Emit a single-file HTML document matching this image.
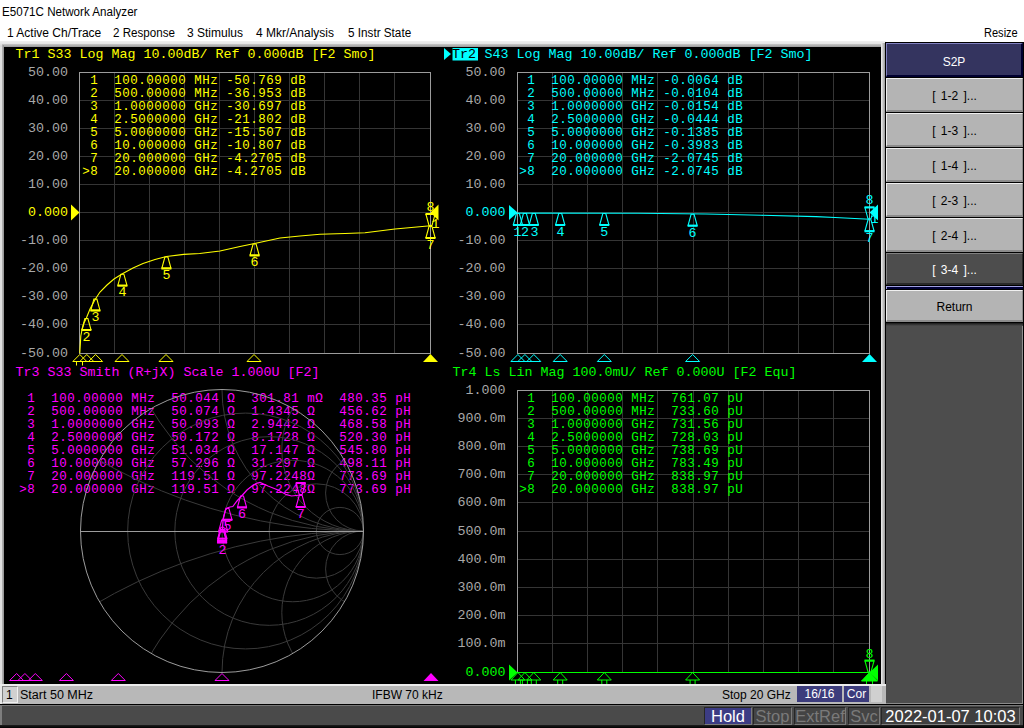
<!DOCTYPE html>
<html><head><meta charset="utf-8">
<style>
*{margin:0;padding:0;box-sizing:border-box}
html,body{width:1024px;height:728px;overflow:hidden;background:#fff;font-family:"Liberation Sans", sans-serif}
.a{position:absolute;white-space:pre}
.menu{font-size:12px;color:#000}
.sk{position:absolute;left:886px;width:137px;height:34px;background:#b4b4b4;border-top:1px solid #f0f0f0;border-left:1px solid #f0f0f0;border-right:1px solid #8c8c8c;border-bottom:2px solid #8c8c8c;font-size:12px;color:#000;text-align:center;line-height:35px;word-spacing:2px}
.nv{background:#34345f;color:#fff;border-top-color:#8080c0;border-left-color:#8080c0;border-right:2px solid #000030;border-bottom:2px solid #000030}
.dk{background:#4d4d4d;color:#fff;border-top-color:#808080;border-left-color:#808080;border-right-color:#2a2a2a;border-bottom-color:#2a2a2a}
.sb{position:absolute;font-size:12px;color:#000}
.bx{position:absolute;top:707px;height:18px;border:1px solid #7a7a7a;border-top-color:#262626;border-left-color:#262626;background:#444;color:#7a7a7a;font-size:16.5px;line-height:16px;text-align:center}
</style></head><body>
<div class="a" style="left:2px;top:5px;font-size:12px;transform:scaleX(0.967);transform-origin:0 0">E5071C Network Analyzer</div>
<div class="a menu" style="left:7px;top:26px">1 Active Ch/Trace</div>
<div class="a menu" style="left:113px;top:26px;transform:scaleX(0.967);transform-origin:0 0">2 Response</div>
<div class="a menu" style="left:187px;top:26px">3 Stimulus</div>
<div class="a menu" style="left:256px;top:26px">4 Mkr/Analysis</div>
<div class="a menu" style="left:348px;top:26px;transform:scaleX(0.976);transform-origin:0 0">5 Instr State</div>
<div class="a menu" style="left:984px;top:26px;transform:scaleX(0.92);transform-origin:0 0">Resize</div>
<!-- frame -->
<div class="a" style="left:0;top:41px;width:886px;height:663px;background:linear-gradient(#f0f0f0,#e4e4e4 3px,#d8d8d8 5px,#d8d8d8)"></div>
<div class="a" style="left:0;top:47px;width:2px;height:640px;background:#e0e0e0"></div>
<div class="a" style="left:2px;top:44px;width:879px;height:3px;background:linear-gradient(#c8c8c8,#9a9a9a)"></div>
<div class="a" style="left:2px;top:45px;width:2px;height:639px;background:linear-gradient(90deg,#b8b8b8,#909090)"></div>
<div class="a" style="left:4px;top:47px;width:877px;height:637px;background:#000"></div>
<div class="a" style="left:881px;top:43px;width:4px;height:661px;background:linear-gradient(90deg,#f0f0f0,#9a9a9a)"></div>
<div class="a" style="left:885px;top:43px;width:1px;height:661px;background:#000"></div>
<svg class="a" style="left:0;top:0" width="1024" height="728" font-family='"Liberation Mono", monospace'>
<path d="M114.5 72.5V353.5 M149.5 72.5V353.5 M184.5 72.5V353.5 M219.5 72.5V353.5 M254.5 72.5V353.5 M289.5 72.5V353.5 M324.5 72.5V353.5 M359.5 72.5V353.5 M394.5 72.5V353.5 M79.5 100.5H430.5 M79.5 128.5H430.5 M79.5 156.5H430.5 M79.5 184.5H430.5 M79.5 212.5H430.5 M79.5 240.5H430.5 M79.5 268.5H430.5 M79.5 296.5H430.5 M79.5 324.5H430.5" stroke="#353535" stroke-width="1" fill="none" shape-rendering="crispEdges"/>
<rect x="79.5" y="72.5" width="351" height="281" stroke="#9c9c9c" stroke-width="1" fill="none" shape-rendering="crispEdges"/>
<text x="68" y="76.1" fill="#a8a8a8" text-anchor="end" font-size="13.33" >50.00</text>
<text x="68" y="104.1" fill="#a8a8a8" text-anchor="end" font-size="13.33" >40.00</text>
<text x="68" y="132.1" fill="#a8a8a8" text-anchor="end" font-size="13.33" >30.00</text>
<text x="68" y="160.1" fill="#a8a8a8" text-anchor="end" font-size="13.33" >20.00</text>
<text x="68" y="188.1" fill="#a8a8a8" text-anchor="end" font-size="13.33" >10.00</text>
<text x="68" y="216.1" fill="#ffff00" text-anchor="end" font-size="13.33" >0.000</text>
<text x="68" y="244.1" fill="#a8a8a8" text-anchor="end" font-size="13.33" >-10.00</text>
<text x="68" y="272.1" fill="#a8a8a8" text-anchor="end" font-size="13.33" >-20.00</text>
<text x="68" y="300.1" fill="#a8a8a8" text-anchor="end" font-size="13.33" >-30.00</text>
<text x="68" y="328.1" fill="#a8a8a8" text-anchor="end" font-size="13.33" >-40.00</text>
<text x="68" y="357.1" fill="#a8a8a8" text-anchor="end" font-size="13.33" >-50.00</text>
<path d="M552.5 72.5V353.5 M587.5 72.5V353.5 M622.5 72.5V353.5 M657.5 72.5V353.5 M693.5 72.5V353.5 M728.5 72.5V353.5 M763.5 72.5V353.5 M798.5 72.5V353.5 M833.5 72.5V353.5 M517.5 100.5H869.5 M517.5 128.5H869.5 M517.5 156.5H869.5 M517.5 184.5H869.5 M517.5 212.5H869.5 M517.5 240.5H869.5 M517.5 268.5H869.5 M517.5 296.5H869.5 M517.5 324.5H869.5" stroke="#353535" stroke-width="1" fill="none" shape-rendering="crispEdges"/>
<rect x="517.5" y="72.5" width="352" height="281" stroke="#9c9c9c" stroke-width="1" fill="none" shape-rendering="crispEdges"/>
<text x="505.5" y="76.1" fill="#a8a8a8" text-anchor="end" font-size="13.33" >50.00</text>
<text x="505.5" y="104.1" fill="#a8a8a8" text-anchor="end" font-size="13.33" >40.00</text>
<text x="505.5" y="132.1" fill="#a8a8a8" text-anchor="end" font-size="13.33" >30.00</text>
<text x="505.5" y="160.1" fill="#a8a8a8" text-anchor="end" font-size="13.33" >20.00</text>
<text x="505.5" y="188.1" fill="#a8a8a8" text-anchor="end" font-size="13.33" >10.00</text>
<text x="505.5" y="216.1" fill="#00ffff" text-anchor="end" font-size="13.33" >0.000</text>
<text x="505.5" y="244.1" fill="#a8a8a8" text-anchor="end" font-size="13.33" >-10.00</text>
<text x="505.5" y="272.1" fill="#a8a8a8" text-anchor="end" font-size="13.33" >-20.00</text>
<text x="505.5" y="300.1" fill="#a8a8a8" text-anchor="end" font-size="13.33" >-30.00</text>
<text x="505.5" y="328.1" fill="#a8a8a8" text-anchor="end" font-size="13.33" >-40.00</text>
<text x="505.5" y="357.1" fill="#a8a8a8" text-anchor="end" font-size="13.33" >-50.00</text>
<path d="M552.5 390.5V672.5 M587.5 390.5V672.5 M622.5 390.5V672.5 M657.5 390.5V672.5 M693.5 390.5V672.5 M728.5 390.5V672.5 M763.5 390.5V672.5 M798.5 390.5V672.5 M833.5 390.5V672.5 M517.5 418.5H869.5 M517.5 446.5H869.5 M517.5 474.5H869.5 M517.5 502.5H869.5 M517.5 531.5H869.5 M517.5 559.5H869.5 M517.5 587.5H869.5 M517.5 615.5H869.5 M517.5 643.5H869.5" stroke="#353535" stroke-width="1" fill="none" shape-rendering="crispEdges"/>
<rect x="517.5" y="390.5" width="352" height="282" stroke="#9c9c9c" stroke-width="1" fill="none" shape-rendering="crispEdges"/>
<text x="505.5" y="394.1" fill="#a8a8a8" text-anchor="end" font-size="13.33" >1.000</text>
<text x="505.5" y="422.1" fill="#a8a8a8" text-anchor="end" font-size="13.33" >900.0m</text>
<text x="505.5" y="450.1" fill="#a8a8a8" text-anchor="end" font-size="13.33" >800.0m</text>
<text x="505.5" y="478.1" fill="#a8a8a8" text-anchor="end" font-size="13.33" >700.0m</text>
<text x="505.5" y="506.1" fill="#a8a8a8" text-anchor="end" font-size="13.33" >600.0m</text>
<text x="505.5" y="535.1" fill="#a8a8a8" text-anchor="end" font-size="13.33" >500.0m</text>
<text x="505.5" y="563.1" fill="#a8a8a8" text-anchor="end" font-size="13.33" >400.0m</text>
<text x="505.5" y="591.1" fill="#a8a8a8" text-anchor="end" font-size="13.33" >300.0m</text>
<text x="505.5" y="619.1" fill="#a8a8a8" text-anchor="end" font-size="13.33" >200.0m</text>
<text x="505.5" y="647.1" fill="#a8a8a8" text-anchor="end" font-size="13.33" >100.0m</text>
<text x="505.5" y="676.1" fill="#00ff00" text-anchor="end" font-size="13.33" >0.000</text>
<text x="15.5" y="58" fill="#ffff00" text-anchor="start" font-size="13.33" >Tr1 S33 Log Mag 10.00dB/ Ref 0.000dB [F2 Smo]</text>
<path d="M444 48L451 54L444 60Z" fill="#00ffff"/>
<rect x="452.5" y="48" width="25.5" height="12.5" fill="#00ffff"/>
<text x="452" y="58" fill="#000000" text-anchor="start" font-size="13.33" >Tr2</text>
<text x="484.5" y="58" fill="#00ffff" text-anchor="start" font-size="13.33" >S43 Log Mag 10.00dB/ Ref 0.000dB [F2 Smo]</text>
<text x="15.5" y="376" fill="#ff00ff" text-anchor="start" font-size="13.33" >Tr3 S33 Smith (R+jX) Scale 1.000U [F2]</text>
<text x="452.5" y="376" fill="#00ff00" text-anchor="start" font-size="13.33" >Tr4 Ls Lin Mag 100.0mU/ Ref 0.000U [F2 Equ]</text>
<text x="82.25" y="84" fill="#ffff00" text-anchor="start" font-size="12.5" xml:space="preserve" letter-spacing="0.5"> 1  100.00000 MHz -50.769 dB</text>
<text x="82.25" y="97" fill="#ffff00" text-anchor="start" font-size="12.5" xml:space="preserve" letter-spacing="0.5"> 2  500.00000 MHz -36.953 dB</text>
<text x="82.25" y="110" fill="#ffff00" text-anchor="start" font-size="12.5" xml:space="preserve" letter-spacing="0.5"> 3  1.0000000 GHz -30.697 dB</text>
<text x="82.25" y="123" fill="#ffff00" text-anchor="start" font-size="12.5" xml:space="preserve" letter-spacing="0.5"> 4  2.5000000 GHz -21.802 dB</text>
<text x="82.25" y="136" fill="#ffff00" text-anchor="start" font-size="12.5" xml:space="preserve" letter-spacing="0.5"> 5  5.0000000 GHz -15.507 dB</text>
<text x="82.25" y="149" fill="#ffff00" text-anchor="start" font-size="12.5" xml:space="preserve" letter-spacing="0.5"> 6  10.000000 GHz -10.807 dB</text>
<text x="82.25" y="162" fill="#ffff00" text-anchor="start" font-size="12.5" xml:space="preserve" letter-spacing="0.5"> 7  20.000000 GHz -4.2705 dB</text>
<text x="82.25" y="175" fill="#ffff00" text-anchor="start" font-size="12.5" xml:space="preserve" letter-spacing="0.5">&gt;8  20.000000 GHz -4.2705 dB</text>
<text x="519.25" y="84" fill="#00ffff" text-anchor="start" font-size="12.5" xml:space="preserve" letter-spacing="0.5"> 1  100.00000 MHz -0.0064 dB</text>
<text x="519.25" y="97" fill="#00ffff" text-anchor="start" font-size="12.5" xml:space="preserve" letter-spacing="0.5"> 2  500.00000 MHz -0.0104 dB</text>
<text x="519.25" y="110" fill="#00ffff" text-anchor="start" font-size="12.5" xml:space="preserve" letter-spacing="0.5"> 3  1.0000000 GHz -0.0154 dB</text>
<text x="519.25" y="123" fill="#00ffff" text-anchor="start" font-size="12.5" xml:space="preserve" letter-spacing="0.5"> 4  2.5000000 GHz -0.0444 dB</text>
<text x="519.25" y="136" fill="#00ffff" text-anchor="start" font-size="12.5" xml:space="preserve" letter-spacing="0.5"> 5  5.0000000 GHz -0.1385 dB</text>
<text x="519.25" y="149" fill="#00ffff" text-anchor="start" font-size="12.5" xml:space="preserve" letter-spacing="0.5"> 6  10.000000 GHz -0.3983 dB</text>
<text x="519.25" y="162" fill="#00ffff" text-anchor="start" font-size="12.5" xml:space="preserve" letter-spacing="0.5"> 7  20.000000 GHz -2.0745 dB</text>
<text x="519.25" y="175" fill="#00ffff" text-anchor="start" font-size="12.5" xml:space="preserve" letter-spacing="0.5">&gt;8  20.000000 GHz -2.0745 dB</text>
<text x="19.25" y="402" fill="#ff00ff" text-anchor="start" font-size="12.5" xml:space="preserve" letter-spacing="0.5"> 1  100.00000 MHz  50.044 Ω  301.81 mΩ  480.35 pH</text>
<text x="19.25" y="415" fill="#ff00ff" text-anchor="start" font-size="12.5" xml:space="preserve" letter-spacing="0.5"> 2  500.00000 MHz  50.074 Ω  1.4345 Ω   456.62 pH</text>
<text x="19.25" y="428" fill="#ff00ff" text-anchor="start" font-size="12.5" xml:space="preserve" letter-spacing="0.5"> 3  1.0000000 GHz  50.093 Ω  2.9442 Ω   468.58 pH</text>
<text x="19.25" y="441" fill="#ff00ff" text-anchor="start" font-size="12.5" xml:space="preserve" letter-spacing="0.5"> 4  2.5000000 GHz  50.172 Ω  8.1728 Ω   520.30 pH</text>
<text x="19.25" y="454" fill="#ff00ff" text-anchor="start" font-size="12.5" xml:space="preserve" letter-spacing="0.5"> 5  5.0000000 GHz  51.034 Ω  17.147 Ω   545.80 pH</text>
<text x="19.25" y="467" fill="#ff00ff" text-anchor="start" font-size="12.5" xml:space="preserve" letter-spacing="0.5"> 6  10.000000 GHz  57.296 Ω  31.297 Ω   498.11 pH</text>
<text x="19.25" y="480" fill="#ff00ff" text-anchor="start" font-size="12.5" xml:space="preserve" letter-spacing="0.5"> 7  20.000000 GHz  119.51 Ω  97.2248Ω   773.69 pH</text>
<text x="19.25" y="493" fill="#ff00ff" text-anchor="start" font-size="12.5" xml:space="preserve" letter-spacing="0.5">&gt;8  20.000000 GHz  119.51 Ω  97.2248Ω   773.69 pH</text>
<text x="519.25" y="402" fill="#00ff00" text-anchor="start" font-size="12.5" xml:space="preserve" letter-spacing="0.5"> 1  100.00000 MHz  761.07 pU</text>
<text x="519.25" y="415" fill="#00ff00" text-anchor="start" font-size="12.5" xml:space="preserve" letter-spacing="0.5"> 2  500.00000 MHz  733.60 pU</text>
<text x="519.25" y="428" fill="#00ff00" text-anchor="start" font-size="12.5" xml:space="preserve" letter-spacing="0.5"> 3  1.0000000 GHz  731.56 pU</text>
<text x="519.25" y="441" fill="#00ff00" text-anchor="start" font-size="12.5" xml:space="preserve" letter-spacing="0.5"> 4  2.5000000 GHz  728.03 pU</text>
<text x="519.25" y="454" fill="#00ff00" text-anchor="start" font-size="12.5" xml:space="preserve" letter-spacing="0.5"> 5  5.0000000 GHz  738.69 pU</text>
<text x="519.25" y="467" fill="#00ff00" text-anchor="start" font-size="12.5" xml:space="preserve" letter-spacing="0.5"> 6  10.000000 GHz  783.49 pU</text>
<text x="519.25" y="480" fill="#00ff00" text-anchor="start" font-size="12.5" xml:space="preserve" letter-spacing="0.5"> 7  20.000000 GHz  838.97 pU</text>
<text x="519.25" y="493" fill="#00ff00" text-anchor="start" font-size="12.5" xml:space="preserve" letter-spacing="0.5">&gt;8  20.000000 GHz  838.97 pU</text>
<polyline points="79.8,353 80.3,345 80.8,336 82,330 84,323 86.4,318 90,309 95.4,299 100,292 107,285 114,279 122.4,273.8 133,268 143,263.5 155,259.5 166.4,256.5 183.8,254.4 199.7,253.5 220,251 240,246.5 254.6,243.5 280,238 300,236 320,234.3 345,233.5 365,232.8 395,229 430.5,225.8" stroke="#ffff00" stroke-width="1.1" fill="none"/>
<polyline points="517.5,213.1 638,213.3 706,214 761,215.3 816,216.6 835,217.5 869.5,219.2" stroke="#00ffff" stroke-width="1.1" fill="none"/>
<path d="M517 672.5H870" stroke="#00ff00" stroke-width="1.2"/>
<path d="M84.9 318.5L87.9 318.5L90.9 329.5L81.9 329.5Z" stroke="#ffff00" stroke-width="1.1" fill="none"/>
<rect x="81.4" y="329.0" width="10" height="2" fill="#ffff00"/>
<text x="86.4" y="340.5" fill="#ffff00" text-anchor="middle" font-size="13.33" >2</text>
<path d="M93.9 299.1L96.9 299.1L99.9 310.1L90.9 310.1Z" stroke="#ffff00" stroke-width="1.1" fill="none"/>
<rect x="90.4" y="309.6" width="10" height="2" fill="#ffff00"/>
<text x="95.4" y="321.1" fill="#ffff00" text-anchor="middle" font-size="13.33" >3</text>
<path d="M120.9 274.2L123.9 274.2L126.9 285.2L117.9 285.2Z" stroke="#ffff00" stroke-width="1.1" fill="none"/>
<rect x="117.4" y="284.7" width="10" height="2" fill="#ffff00"/>
<text x="122.4" y="296.2" fill="#ffff00" text-anchor="middle" font-size="13.33" >4</text>
<path d="M164.9 257.0L167.9 257.0L170.9 268.0L161.9 268.0Z" stroke="#ffff00" stroke-width="1.1" fill="none"/>
<rect x="161.4" y="267.5" width="10" height="2" fill="#ffff00"/>
<text x="166.4" y="279.0" fill="#ffff00" text-anchor="middle" font-size="13.33" >5</text>
<path d="M253.1 244.0L256.1 244.0L259.1 255.0L250.1 255.0Z" stroke="#ffff00" stroke-width="1.1" fill="none"/>
<rect x="249.6" y="254.5" width="10" height="2" fill="#ffff00"/>
<text x="254.6" y="266.0" fill="#ffff00" text-anchor="middle" font-size="13.33" >6</text>
<path d="M429.0 226.5L432.0 226.5L435.0 237.5L426.0 237.5Z" stroke="#ffff00" stroke-width="1.1" fill="none"/>
<rect x="425.5" y="237.0" width="10" height="2" fill="#ffff00"/>
<text x="430.5" y="248.5" fill="#ffff00" text-anchor="middle" font-size="13.33" >7</text>
<path d="M429.0 225.5L432.0 225.5L435.0 214.5L426.0 214.5Z" stroke="#ffff00" stroke-width="1.1" fill="none"/>
<rect x="425.5" y="213.0" width="10" height="2" fill="#ffff00"/>
<text x="430.5" y="211" fill="#ffff00" text-anchor="middle" font-size="13.33" >8</text>
<text x="435.5" y="227.5" fill="#ffff00" text-anchor="middle" font-size="13.33" >1</text>
<path d="M79.8 354.5L86.8 361.5L72.8 361.5Z" stroke="#ffff00" stroke-width="1" fill="none"/>
<path d="M86.8 354.5L93.8 361.5L79.8 361.5Z" stroke="#ffff00" stroke-width="1" fill="none"/>
<path d="M95.6 354.5L102.6 361.5L88.6 361.5Z" stroke="#ffff00" stroke-width="1" fill="none"/>
<path d="M122.0 354.5L129.0 361.5L115.0 361.5Z" stroke="#ffff00" stroke-width="1" fill="none"/>
<path d="M166.0 354.5L173.0 361.5L159.0 361.5Z" stroke="#ffff00" stroke-width="1" fill="none"/>
<path d="M254.0 354.5L261.0 361.5L247.0 361.5Z" stroke="#ffff00" stroke-width="1" fill="none"/>
<path d="M430.5 354L438.0 362L423.0 362Z" fill="#ffff00"/>
<path d="M76.5 361V365.5M82.5 361V365.5" stroke="#ffff00" stroke-width="1"/>
<path d="M71 204.5L79.5 212.5L71 220.5Z" fill="#ffff00"/>
<path d="M438.5 204.5L430.5 212.5L438.5 220.5Z" fill="#ffff00"/>
<path d="M516.4 213.5L519.4 213.5L522.4 224.5L513.4 224.5Z" stroke="#00ffff" stroke-width="1.1" fill="none"/>
<rect x="512.9" y="224.0" width="10" height="2" fill="#00ffff"/>
<path d="M523.4 213.5L526.4 213.5L529.4 224.5L520.4 224.5Z" stroke="#00ffff" stroke-width="1.1" fill="none"/>
<rect x="519.9" y="224.0" width="10" height="2" fill="#00ffff"/>
<path d="M532.3 213.5L535.3 213.5L538.3 224.5L529.3 224.5Z" stroke="#00ffff" stroke-width="1.1" fill="none"/>
<rect x="528.8" y="224.0" width="10" height="2" fill="#00ffff"/>
<path d="M558.7 213.5L561.7 213.5L564.7 224.5L555.7 224.5Z" stroke="#00ffff" stroke-width="1.1" fill="none"/>
<rect x="555.2" y="224.0" width="10" height="2" fill="#00ffff"/>
<path d="M602.8 213.5L605.8 213.5L608.8 224.5L599.8 224.5Z" stroke="#00ffff" stroke-width="1.1" fill="none"/>
<rect x="599.3" y="224.0" width="10" height="2" fill="#00ffff"/>
<path d="M691.1 214.3L694.1 214.3L697.1 225.3L688.1 225.3Z" stroke="#00ffff" stroke-width="1.1" fill="none"/>
<rect x="687.6" y="224.8" width="10" height="2" fill="#00ffff"/>
<text x="517.5" y="236" fill="#00ffff" text-anchor="middle" font-size="13.33" >1</text>
<text x="525" y="236" fill="#00ffff" text-anchor="middle" font-size="13.33" >2</text>
<text x="534.5" y="236" fill="#00ffff" text-anchor="middle" font-size="13.33" >3</text>
<text x="560.4" y="236" fill="#00ffff" text-anchor="middle" font-size="13.33" >4</text>
<text x="604.3" y="236" fill="#00ffff" text-anchor="middle" font-size="13.33" >5</text>
<text x="692.6" y="237" fill="#00ffff" text-anchor="middle" font-size="13.33" >6</text>
<text x="874.5" y="222.5" fill="#00ffff" text-anchor="middle" font-size="13.33" >1</text>
<path d="M868.0 219.8L871.0 219.8L874.0 230.8L865.0 230.8Z" stroke="#00ffff" stroke-width="1.1" fill="none"/>
<rect x="864.5" y="230.3" width="10" height="2" fill="#00ffff"/>
<text x="869.5" y="241.8" fill="#00ffff" text-anchor="middle" font-size="13.33" >7</text>
<path d="M868.0 218.8L871.0 218.8L874.0 207.8L865.0 207.8Z" stroke="#00ffff" stroke-width="1.1" fill="none"/>
<rect x="864.5" y="206.3" width="10" height="2" fill="#00ffff"/>
<text x="869.5" y="204.3" fill="#00ffff" text-anchor="middle" font-size="13.33" >8</text>
<path d="M517.9 354.5L524.9 361.5L510.9 361.5Z" stroke="#00ffff" stroke-width="1" fill="none"/>
<path d="M524.9 354.5L531.9 361.5L517.9 361.5Z" stroke="#00ffff" stroke-width="1" fill="none"/>
<path d="M533.8 354.5L540.8 361.5L526.8 361.5Z" stroke="#00ffff" stroke-width="1" fill="none"/>
<path d="M560.2 354.5L567.2 361.5L553.2 361.5Z" stroke="#00ffff" stroke-width="1" fill="none"/>
<path d="M604.3 354.5L611.3 361.5L597.3 361.5Z" stroke="#00ffff" stroke-width="1" fill="none"/>
<path d="M692.6 354.5L699.6 361.5L685.6 361.5Z" stroke="#00ffff" stroke-width="1" fill="none"/>
<path d="M869.5 354L877.0 362L862.0 362Z" fill="#00ffff"/>
<path d="M509 205L517.5 212.5L509 220Z" fill="#00ffff"/>
<path d="M878 204.5L869.5 212.5L878 220.5Z" fill="#00ffff"/>
<path d="M517.9 672.5L524.9 680L510.9 680Z M515.4 680V684 M520.4 680V684" stroke="#00ff00" stroke-width="1" fill="none"/>
<path d="M524.9 672.5L531.9 680L517.9 680Z M522.4 680V684 M527.4 680V684" stroke="#00ff00" stroke-width="1" fill="none"/>
<path d="M533.8 672.5L540.8 680L526.8 680Z M531.3 680V684 M536.3 680V684" stroke="#00ff00" stroke-width="1" fill="none"/>
<path d="M560.2 672.5L567.2 680L553.2 680Z M557.7 680V684 M562.7 680V684" stroke="#00ff00" stroke-width="1" fill="none"/>
<path d="M604.3 672.5L611.3 680L597.3 680Z M601.8 680V684 M606.8 680V684" stroke="#00ff00" stroke-width="1" fill="none"/>
<path d="M692.6 672.5L699.6 680L685.6 680Z M690.1 680V684 M695.1 680V684" stroke="#00ff00" stroke-width="1" fill="none"/>
<path d="M868.0 672.0L871.0 672.0L874.0 661.0L865.0 661.0Z" stroke="#00ff00" stroke-width="1.1" fill="none"/>
<rect x="864.5" y="659.5" width="10" height="2" fill="#00ff00"/>
<text x="869.5" y="657.5" fill="#00ff00" text-anchor="middle" font-size="13.33" >8</text>
<path d="M509 664.5L517.5 672.5L509 680.5Z" fill="#00ff00"/>
<path d="M878 664.5L869.5 672.5L878 680.5Z" fill="#00ff00"/>
<path d="M869.5 672.5L877.5 681L861.5 681Z M866.5 681V684 M872.5 681V684" fill="#00ff00" stroke="#00ff00" stroke-width="1"/>
<defs><clipPath id="sc"><circle cx="222" cy="531" r="141.5"/></clipPath></defs>
<g stroke="#3a3a3a" stroke-width="1" fill="none" clip-path="url(#sc)"><circle cx="245.58" cy="531" r="117.92"/><circle cx="269.17" cy="531" r="94.33"/><circle cx="292.75" cy="531" r="70.75"/><circle cx="316.33" cy="531" r="47.17"/><circle cx="339.92" cy="531" r="23.58"/><circle cx="363.50" cy="2.91" r="528.09"/><circle cx="363.50" cy="1059.09" r="528.09"/><circle cx="363.50" cy="285.91" r="245.09"/><circle cx="363.50" cy="776.09" r="245.09"/><circle cx="363.50" cy="389.50" r="141.50"/><circle cx="363.50" cy="672.50" r="141.50"/><circle cx="363.50" cy="449.30" r="81.70"/><circle cx="363.50" cy="612.70" r="81.70"/><circle cx="363.50" cy="493.09" r="37.91"/><circle cx="363.50" cy="568.91" r="37.91"/></g>
<circle cx="222" cy="531" r="141.5" stroke="#9c9c9c" stroke-width="1" fill="none"/>
<path d="M80.5 531.5H363.5" stroke="#9c9c9c" stroke-width="1"/>
<polyline points="222.1,531 222.3,529 222.6,526.5 223.2,519.6 224.5,514 225.5,510 227.4,507.9 230,507 232.8,506.5 237,501 242,495.5 247,490 252,486 256,483.5 260,482.4 268,486 278,490 286.5,494.7 291.5,496 300.7,495" stroke="#ff00ff" stroke-width="1.2" fill="none"/>
<path d="M220.6 531.1L223.6 531.1L226.6 542.1L217.6 542.1Z" stroke="#ff00ff" stroke-width="1.1" fill="none"/>
<rect x="217.1" y="541.6" width="10" height="2" fill="#ff00ff"/>
<path d="M220.6 529.5L223.6 529.5L226.6 540.5L217.6 540.5Z" stroke="#ff00ff" stroke-width="1.1" fill="none"/>
<rect x="217.1" y="540.0" width="10" height="2" fill="#ff00ff"/>
<path d="M220.8 527.3L223.8 527.3L226.8 538.3L217.8 538.3Z" stroke="#ff00ff" stroke-width="1.1" fill="none"/>
<rect x="217.3" y="537.8" width="10" height="2" fill="#ff00ff"/>
<path d="M221.7 520.1L224.7 520.1L227.7 531.1L218.7 531.1Z" stroke="#ff00ff" stroke-width="1.1" fill="none"/>
<rect x="218.2" y="530.6" width="10" height="2" fill="#ff00ff"/>
<text x="222.5" y="554" fill="#ff00ff" text-anchor="middle" font-size="13.33" >2</text>
<path d="M225.9 508.4L228.9 508.4L231.9 519.4L222.9 519.4Z" stroke="#ff00ff" stroke-width="1.1" fill="none"/>
<rect x="222.4" y="518.9" width="10" height="2" fill="#ff00ff"/>
<text x="227.4" y="530.4" fill="#ff00ff" text-anchor="middle" font-size="13.33" >5</text>
<path d="M240.5 496.0L243.5 496.0L246.5 507.0L237.5 507.0Z" stroke="#ff00ff" stroke-width="1.1" fill="none"/>
<rect x="237.0" y="506.5" width="10" height="2" fill="#ff00ff"/>
<text x="242" y="518.0" fill="#ff00ff" text-anchor="middle" font-size="13.33" >6</text>
<path d="M299.2 495.5L302.2 495.5L305.2 506.5L296.2 506.5Z" stroke="#ff00ff" stroke-width="1.1" fill="none"/>
<rect x="295.7" y="506.0" width="10" height="2" fill="#ff00ff"/>
<text x="300.7" y="517.5" fill="#ff00ff" text-anchor="middle" font-size="13.33" >7</text>
<path d="M299.2 494.5L302.2 494.5L305.2 483.5L296.2 483.5Z" stroke="#ff00ff" stroke-width="1.1" fill="none"/>
<rect x="295.7" y="482.0" width="10" height="2" fill="#ff00ff"/>
<path d="M16.6 673.5L23.6 680.5L9.6 680.5Z" stroke="#ff00ff" stroke-width="1" fill="none"/>
<path d="M24.9 673.5L31.9 680.5L17.9 680.5Z" stroke="#ff00ff" stroke-width="1" fill="none"/>
<path d="M35.3 673.5L42.3 680.5L28.3 680.5Z" stroke="#ff00ff" stroke-width="1" fill="none"/>
<path d="M66.4 673.5L73.4 680.5L59.4 680.5Z" stroke="#ff00ff" stroke-width="1" fill="none"/>
<path d="M118.3 673.5L125.3 680.5L111.3 680.5Z" stroke="#ff00ff" stroke-width="1" fill="none"/>
<path d="M222.0 673.5L229.0 680.5L215.0 680.5Z" stroke="#ff00ff" stroke-width="1" fill="none"/>
<path d="M431.0 673L438.5 681L423.5 681Z" fill="#ff00ff"/>
</svg>
<!-- softkeys -->
<div class="a" style="left:886px;top:42px;width:137px;height:662px;background:#4d4d4d;border-right:1px solid #8e8e8e;border-bottom:1px solid #8a8a8a"></div>
<div class="a" style="left:1023px;top:42px;width:1px;height:662px;background:#000"></div>
<div class="a" style="left:886px;top:323px;width:137px;height:3px;background:linear-gradient(#1a1a1a,#4d4d4d)"></div>
<div class="a" style="left:885px;top:42px;width:139px;height:281px;background:#000"></div>
<div class="sk nv" style="top:43px;line-height:37px">S2P</div>
<div class="sk" style="top:78px">[ 1-2 ]...</div>
<div class="sk" style="top:113px">[ 1-3 ]...</div>
<div class="sk" style="top:148px">[ 1-4 ]...</div>
<div class="sk" style="top:183px">[ 2-3 ]...</div>
<div class="sk" style="top:218px">[ 2-4 ]...</div>
<div class="sk dk" style="top:253px;height:32px;line-height:33px">[ 3-4 ]...</div>
<div class="a" style="left:886px;top:286px;width:137px;height:3px;background:#000038;border-top:1px solid #a0a0e0;border-left:1px solid #a0a0e0"></div>
<div class="sk" style="top:290px;height:32px;line-height:32px">Return</div>
<!-- status bar -->
<div class="a" style="left:0;top:684px;width:886px;height:2px;background:#ececec"></div>
<div class="a" style="left:0;top:686px;width:886px;height:18px;background:#b8b8b8;border-left:2px solid #e8e8e8"></div>
<div class="a" style="left:886px;top:703px;width:137px;height:1px;background:#8a8a8a"></div>
<div class="a" style="left:2px;top:686px;width:16px;height:17px;background:#d0d0d0;border:1px solid #f0f0f0;border-top-color:#808080;border-left-color:#808080"></div>
<div class="a sb" style="left:6px;top:688px">1</div>
<div class="a sb" style="left:20px;top:688px;transform:scaleX(1.044);transform-origin:0 0">Start 50 MHz</div>
<div class="a sb" style="left:372px;top:688px">IFBW 70 kHz</div>
<div class="a sb" style="left:722px;top:688px">Stop 20 GHz</div>
<div class="a sb" style="left:797px;top:686px;width:45px;height:16px;background:#3c3c7c;color:#fff;text-align:center;line-height:16px">16/16</div>
<div class="a sb" style="left:844px;top:686px;width:25px;height:16px;background:#3c3c7c;color:#fff;text-align:center;line-height:16px">Cor</div>
<div class="a" style="left:871px;top:686px;width:11px;height:16px;background:#d0d0d0"></div>
<!-- bottom bar -->
<div class="a" style="left:0;top:704px;width:1024px;height:1px;background:#000"></div>
<div class="a" style="left:0;top:705px;width:1024px;height:20px;background:#4a4a4a;border-top:1px solid #767676;border-left:2px solid #7e7e7e"></div>
<div class="a" style="left:0;top:725px;width:1024px;height:3px;background:linear-gradient(#1e1e1e,#000)"></div>
<div class="a" style="left:1023px;top:704px;width:1px;height:24px;background:#000"></div>
<div class="bx" style="left:704px;width:48px;background:#3c3c84;color:#fff">Hold</div>
<div class="bx" style="left:753px;width:39px">Stop</div>
<div class="bx" style="left:794px;width:52px">ExtRef</div>
<div class="bx" style="left:848px;width:32px">Svc</div>
<div class="bx" style="left:881px;width:139px;color:#fff;background:#404040">2022-01-07 10:03</div>
</body></html>
